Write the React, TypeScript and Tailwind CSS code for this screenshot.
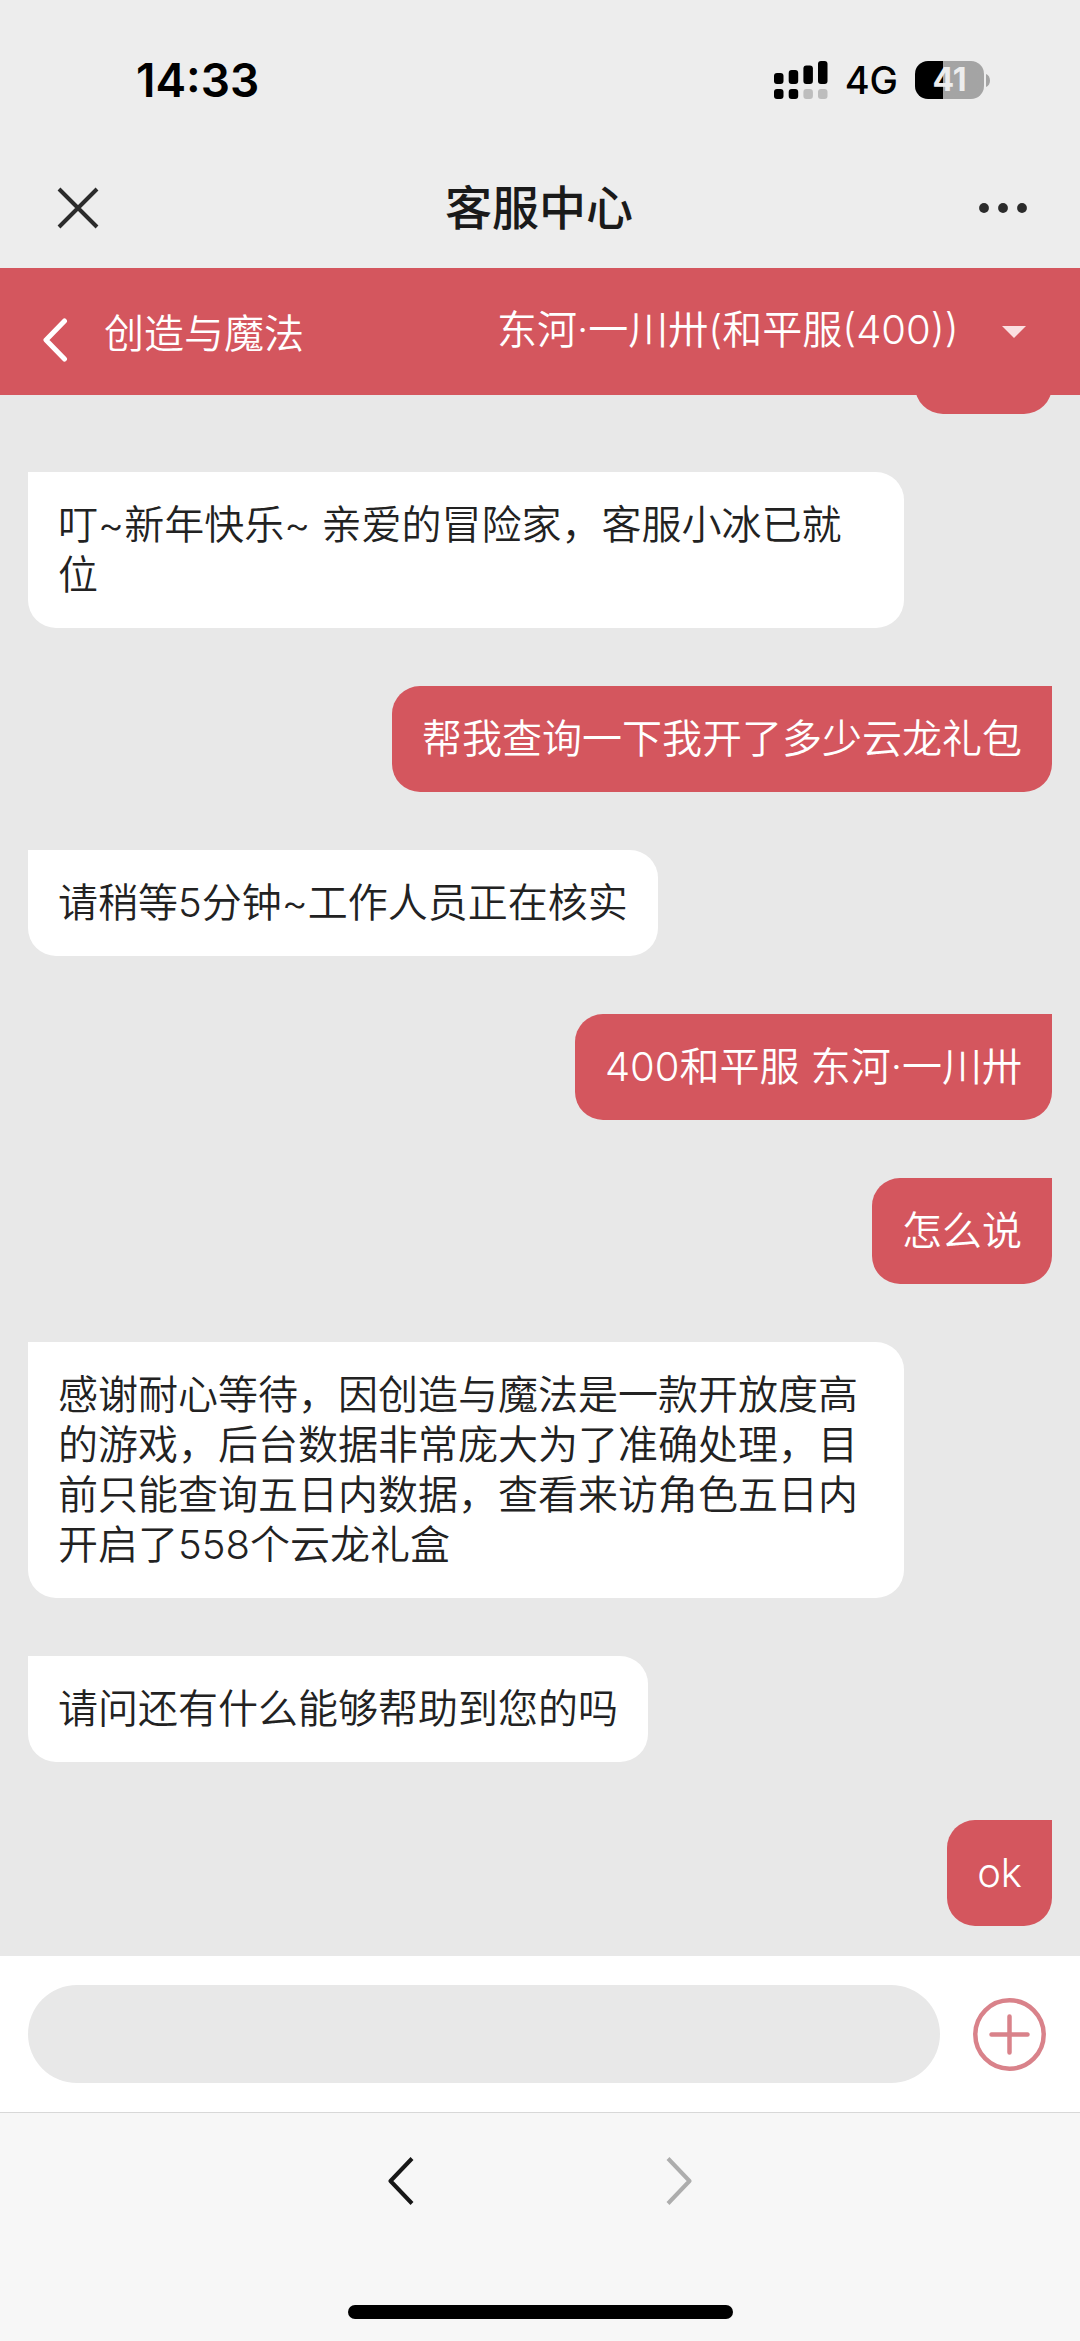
import React from "react";

type Message = { from: "agent" | "player"; text: string };

const messages: Message[] = [
  { from: "agent", text: "叮~新年快乐~ 亲爱的冒险家，客服小冰已就位" },
  { from: "player", text: "帮我查询一下我开了多少云龙礼包" },
  { from: "agent", text: "请稍等5分钟~工作人员正在核实" },
  { from: "player", text: "400和平服 东河·一川卅" },
  { from: "player", text: "怎么说" },
  {
    from: "agent",
    text: "感谢耐心等待，因创造与魔法是一款开放度高的游戏，后台数据非常庞大为了准确处理，目前只能查询五日内数据，查看来访角色五日内开启了558个云龙礼盒",
  },
  { from: "agent", text: "请问还有什么能够帮助到您的吗" },
  { from: "player", text: "ok" },
];

function Signal() {
  return (
    <svg width="54" height="38" viewBox="0 0 54 38" aria-label="信号">
      <rect x="0" y="12" width="9.5" height="11" rx="3" />
      <rect x="14.7" y="9" width="9.5" height="14" rx="3" />
      <rect x="29.4" y="4.5" width="9.5" height="18.5" rx="3" />
      <rect x="44" y="0" width="9.5" height="23" rx="3" />
      <rect x="0" y="28" width="9.5" height="10" rx="3" />
      <rect x="14.7" y="28" width="9.5" height="10" rx="3" />
      <rect x="29.4" y="28" width="9.5" height="10" rx="3" fill="#bdbdbd" />
      <rect x="44" y="28" width="9.5" height="10" rx="3" fill="#bdbdbd" />
    </svg>
  );
}

function Battery() {
  return (
    <div className="flex items-center gap-[2px]">
      <div className="flex h-[38px] w-[69px] items-center justify-center rounded-[13px] bg-linear-to-r from-black from-41% to-[#a4a4a4] to-41% text-[32px] leading-none font-bold text-[#ededed]">
        41
      </div>
      <svg width="4" height="13" viewBox="0 0 4 13" aria-hidden="true">
        <path d="M0 0C5.3 2 5.3 11 0 13Z" fill="#a4a4a4" />
      </svg>
    </div>
  );
}

function StatusBar() {
  return (
    <div className="flex h-[148px] items-center justify-between pt-3 pr-[90px] pl-[136px] text-black">
      <span className="text-[46px] leading-none font-semibold">14:33</span>
      <div className="flex items-center gap-[17px]">
        <Signal />
        <span className="text-[38px] leading-none font-medium">4G</span>
        <Battery />
      </div>
    </div>
  );
}

function TitleBar() {
  return (
    <header className="flex h-[120px] items-center justify-between pr-[52px] pl-[56px] text-[#1a1a1a]">
      <button aria-label="关闭" className="flex w-11 justify-center">
        <svg width="42" height="42" viewBox="0 0 42 42" fill="none" stroke="#2b2b2b" strokeWidth="4">
          <path d="M2 2L40 40M40 2L2 40" />
        </svg>
      </button>
      <h1 className="pb-[2px] text-[47px] leading-none font-medium">客服中心</h1>
      <button aria-label="更多" className="flex w-[50px] justify-end">
        <svg width="50" height="12" viewBox="0 0 50 12" fill="#2b2b2b">
          <circle cx="6" cy="6" r="4.9" />
          <circle cx="25" cy="6" r="4.9" />
          <circle cx="44" cy="6" r="4.9" />
        </svg>
      </button>
    </header>
  );
}

function GameBar() {
  return (
    <div className="flex h-[127px] shrink-0 items-center justify-between bg-[#d4565e] pl-[42px] text-[40px] leading-[50px] font-[350] text-white">
      <div className="flex items-center gap-9 pt-1">
        <button aria-label="返回" className="pt-3">
          <svg width="26" height="44" viewBox="0 0 26 44" fill="none" stroke="#fff" strokeWidth="5" strokeLinecap="round" strokeLinejoin="round">
            <path d="M22.5 3L4 22L22.5 41" />
          </svg>
        </button>
        <h2>创造与魔法</h2>
      </div>
      <div className="relative flex items-center">
        <select
          aria-label="选择角色"
          className="h-[60px] appearance-none bg-transparent pr-[121px] pb-1 leading-[50px] outline-none"
        >
          <option>东河·一川卅(和平服(400))</option>
        </select>
        <svg width="24" height="12" viewBox="0 0 24 12" className="pointer-events-none absolute right-[54px]" aria-hidden="true">
          <path d="M0 0H24L12 12Z" fill="#fbdfe1" />
        </svg>
      </div>
    </div>
  );
}

function Bubble({ from, text }: Message) {
  return (
    <li
      className={
        from === "agent"
          ? "max-w-[876px] shrink-0 self-start rounded-[28px] rounded-tl-none bg-white px-[30px] py-7 text-[#222]"
          : "max-w-[876px] shrink-0 self-end rounded-[28px] rounded-tr-none bg-[#d4565e] px-[30px] py-7 text-white"
      }
    >
      {text}
    </li>
  );
}

function Composer() {
  return (
    <form className="flex h-[156px] shrink-0 items-center justify-between gap-[33px] bg-white pr-[34px] pl-7">
      <input
        type="text"
        aria-label="输入消息"
        className="h-[98px] min-w-0 flex-1 rounded-full bg-[#e8e8e8] px-10 text-[40px] outline-none"
      />
      <button type="button" aria-label="添加">
        <svg width="73" height="73" viewBox="0 0 73 73" fill="none" stroke="#d9828a" strokeWidth="4.5" strokeLinecap="round">
          <circle cx="36.5" cy="36.5" r="34.2" />
          <path d="M36.5 18.5V54.5M18.5 36.5H54.5" />
        </svg>
      </button>
    </form>
  );
}

function BrowserBar() {
  return (
    <footer className="flex h-[229px] shrink-0 flex-col items-center justify-between border-t border-[#d8d8d8] bg-[#f7f7f7] pb-[22px]">
      <nav className="flex h-[135px] items-center gap-[252px]">
        <button aria-label="后退">
          <svg width="26" height="48" viewBox="0 0 26 48" fill="none" stroke="#171717" strokeWidth="4" strokeLinejoin="round">
            <path d="M24 1.5L2.5 24L24 46.5" />
          </svg>
        </button>
        <button aria-label="前进" disabled>
          <svg width="26" height="48" viewBox="0 0 26 48" fill="none" stroke="#adadad" strokeWidth="4" strokeLinejoin="round">
            <path d="M2 1.5L23.5 24L2 46.5" />
          </svg>
        </button>
      </nav>
      <div className="h-[14px] w-[385px] rounded-full bg-black" />
    </footer>
  );
}

export default function App() {
  return (
    <div className="flex h-screen flex-col bg-[#ededed] font-[Inter,'Noto_Sans_CJK_SC',sans-serif]" lang="zh-CN">
      <StatusBar />
      <TitleBar />
      <GameBar />
      <main className="flex min-h-0 flex-1 flex-col justify-end overflow-hidden bg-[#e8e8e8]">
        <ul className="flex flex-col gap-[58px] px-7 pb-[30px] text-[40px] leading-[50px] font-[350]">
          <li aria-hidden="true" className="h-[106px] w-[137px] shrink-0 self-end rounded-[28px] rounded-tr-none bg-[#d4565e]" />
          {messages.map((m) => (
            <Bubble key={m.text} {...m} />
          ))}
        </ul>
      </main>
      <Composer />
      <BrowserBar />
    </div>
  );
}
